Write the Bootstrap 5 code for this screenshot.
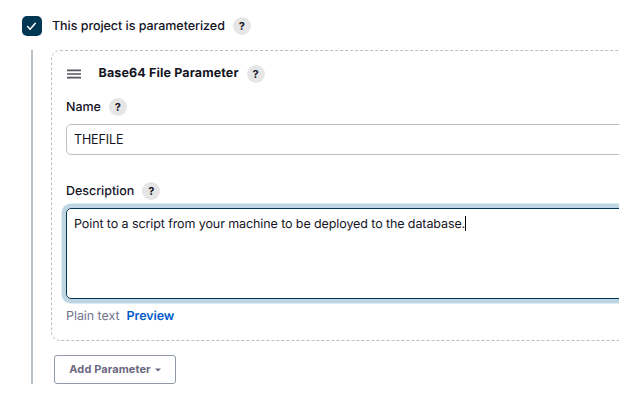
<!DOCTYPE html>
<html lang="en">
<head>
<meta charset="utf-8">
<meta name="viewport" content="width=device-width, initial-scale=1">
<title>Project parameters</title>
<link rel="stylesheet" href="https://cdn.jsdelivr.net/npm/bootstrap@5.3.0/dist/css/bootstrap.min.css">
<style>
body{font-family:Inter,sans-serif;font-size:12.5px;line-height:20px;color:#14141f;background:#fff;text-rendering:geometricPrecision}
.page-wrap{height:401px;padding:16px 0 0 22px}
.check-box{width:20px;height:20px;border-radius:5px;background:#003753;margin-right:10px}
.label-text,.param-title{height:20px;line-height:22px}
.label-text{font-weight:500;letter-spacing:-.04px}
.help-dot{width:18px;height:18px;border:0;border-radius:50%;background:#e6e6e6;color:#14141f;font-size:11px;font-weight:700;line-height:18px;padding:0}
.help-title{margin-top:2px}
.section-body{width:700px;height:334px;margin:14px 0 0 9px;border-left:2px solid #b8c3c9;padding-left:18px}
.param-box{height:291px;border:1px dashed #b5bec6;border-radius:9px;padding:12px 14px 0}
.param-title{font-weight:700;margin-left:17.5px;letter-spacing:.14px}
.row-name{margin-top:14px}
.row-desc{margin-top:26px}
.field-name{height:31px;margin-top:7px;border:1px solid #b8c1ca;border-radius:5px;padding:0 7px;font-size:12.5px;letter-spacing:-.12px;color:#14141f}
.field-desc{height:91px;margin-top:7px;border:1px solid #003753;border-radius:5px;padding:6px 7px;letter-spacing:-.095px;box-shadow:0 0 0 4.5px #bed5e3}
.text-caret{width:1px;height:15px;margin-top:1px;background:#000}
.mode-row{color:#73738c;gap:7px;margin-top:8px;letter-spacing:-.06px}
.mode-row a{color:#005bcb;font-weight:600}
.add-btn{width:122px;height:29px;margin:14px 0 0 3px;border:1px solid #8f9aa5;border-radius:3px;padding:0;font-size:11px;font-weight:700;color:#6b6880;letter-spacing:.1px}
</style>
</head>
<body>
<main class="page-wrap overflow-hidden">
  <div class="d-flex align-items-center">
    <span class="check-box d-flex" role="checkbox" aria-checked="true">
      <svg width="20" height="20" viewBox="0 0 20 20" fill="none" stroke="#fff" stroke-width="1.5" stroke-linecap="round" stroke-linejoin="round"><path d="M5.6 10.6 8.1 13.2 13.3 7.3"/></svg>
    </span>
    <span class="label-text">This project is parameterized</span>
    <button class="help-dot ms-2">?</button>
  </div>
  <section class="section-body">
    <div class="param-box">
      <div class="d-flex align-items-center">
        <svg width="15" height="20" viewBox="0 0 15 20" stroke="#55555f" stroke-width="1.6"><path d="M1 7.4H15M1 11H15M1 14.6H15"/></svg>
        <span class="param-title">Base64 File Parameter</span>
        <button class="help-dot help-title ms-2">?</button>
      </div>
      <div class="row-name d-flex align-items-center">
        <span class="label-text">Name</span>
        <button class="help-dot ms-2">?</button>
      </div>
      <input class="form-control field-name" value="THEFILE" aria-label="Name">
      <div class="row-desc d-flex align-items-center">
        <span class="label-text">Description</span>
        <button class="help-dot ms-2">?</button>
      </div>
      <div class="field-desc d-flex" role="textbox" aria-multiline="true"><span>Point to a script from your machine to be deployed to the database.</span><span class="text-caret"></span></div>
      <div class="mode-row d-flex"><span>Plain text</span><a class="text-decoration-none" href="#">Preview</a></div>
    </div>
    <button class="btn add-btn d-flex align-items-center justify-content-center">Add Parameter
      <svg class="ms-1" width="6" height="4" viewBox="0 0 6 4"><path d="M0 .5H6L3 3.5Z" fill="#6b6880"/></svg>
    </button>
  </section>
</main>
<script src="https://cdn.jsdelivr.net/npm/bootstrap@5.3.0/dist/js/bootstrap.bundle.min.js"></script>
</body>
</html>
